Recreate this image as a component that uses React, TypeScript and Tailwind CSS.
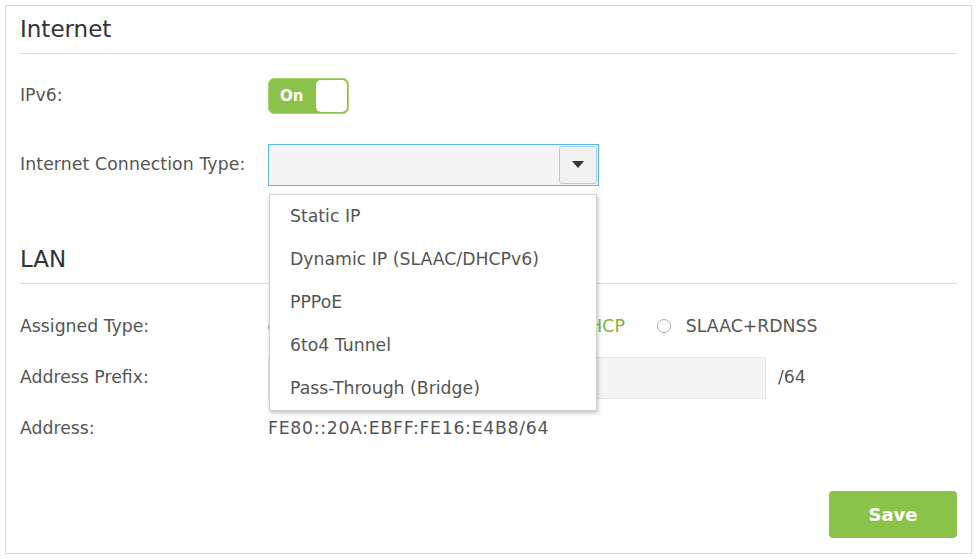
import * as React from "react";

const font = "font-['DejaVu_Sans',Verdana,sans-serif]";

const OPTIONS = ["Static IP", "Dynamic IP (SLAAC/DHCPv6)", "PPPoE", "6to4 Tunnel", "Pass-Through (Bridge)"];

function Heading({ children, className = "" }: { children: React.ReactNode; className?: string }) {
  return (
    <div className={`flex h-[48px] items-center border-b border-[#dcdcdc] text-[23px] text-[#333] ${className}`}>
      {children}
    </div>
  );
}

function Row({ label, className = "", children }: { label: string; className?: string; children?: React.ReactNode }) {
  return (
    <div className={`flex items-center ${className}`}>
      <div className="w-[248px] shrink-0 text-[#555]">{label}</div>
      {children}
    </div>
  );
}

function Radio({ label, checked }: { label: string; checked?: boolean }) {
  return (
    <span className="inline-flex items-center gap-[15px]">
      <span className="size-[14px] rounded-full border border-[#a8a8a8] bg-white" />
      <span className={checked ? "text-[#7cb342]" : "text-[#555]"}>{label}</span>
    </span>
  );
}

export default function App() {
  return (
    <div className={`${font} bg-white text-[17.3px] leading-none`}>
      <div className="m-[5px] flex h-[549px] w-[967px] flex-col border border-[#d7d7d7] pl-[14px] pr-[14px]">
        <Heading>Internet</Heading>

        <Row label="IPv6:" className="mt-[24px] h-[36px]">
          <div className="flex h-[36px] w-[81px] items-center justify-between rounded-[6px] border border-[#a5d46f] bg-[#8bc34a] pl-[11px] pr-[1px]">
            <span className="text-[15px] font-bold text-white">On</span>
            <span className="h-[32px] w-[31px] rounded-[5px] bg-white" />
          </div>
        </Row>

        <Row label="Internet Connection Type:" className="mt-[30px] h-[42px] tracking-[0.1px]">
          <div className="relative tracking-normal">
            <div className="flex h-[42px] w-[331px] items-center justify-end border border-[#5cb8e8] bg-[#f4f4f4] pr-[1px]">
              <div className="flex h-[38px] w-[38px] items-center justify-center rounded-[3px] border border-[#a9cdf0] bg-[#f1f1f1]">
                <svg width="12" height="8" viewBox="0 0 12 8">
                  <path d="M0 0h12L6 7z" fill="#333" />
                </svg>
              </div>
            </div>
            <ul className="absolute left-[1px] top-[50px] z-10 w-[328px] border border-[#d0d0d0] bg-white shadow-[1px_2px_4px_rgba(0,0,0,0.25)]">
              {OPTIONS.map((o) => (
                <li key={o} className="flex h-[43px] items-center pl-[20px] text-[#555]">
                  {o}
                </li>
              ))}
            </ul>
          </div>
        </Row>

        <Heading className="mt-[50px]">LAN</Heading>

        <Row label="Assigned Type:" className="mt-[25px] h-[36px]">
          <div className="flex items-center">
            <Radio label="DHCPv6" />
            <span className="ml-[24px]">
              <Radio label="SLAAC+Stateless DHCP" checked />
            </span>
            <span className="ml-[32px]">
              <Radio label="SLAAC+RDNSS" />
            </span>
          </div>
        </Row>

        <Row label="Address Prefix:" className="mt-[12px] h-[42px]">
          <div className="h-[42px] w-[498px] border border-[#e6e6e6] bg-[#f4f4f4]" />
          <span className="ml-[12px] text-[#555]">/64</span>
        </Row>

        <Row label="Address:" className="mt-[15px] h-[30px]">
          <span className="tracking-[0.7px] text-[#555]">FE80::20A:EBFF:FE16:E4B8/64</span>
        </Row>

        <div className="mt-[47px] flex justify-end">
          <button className="h-[47px] w-[128px] rounded-[4px] bg-[#8bc34a] text-[18px] font-bold text-white">
            Save
          </button>
        </div>
      </div>
    </div>
  );
}
